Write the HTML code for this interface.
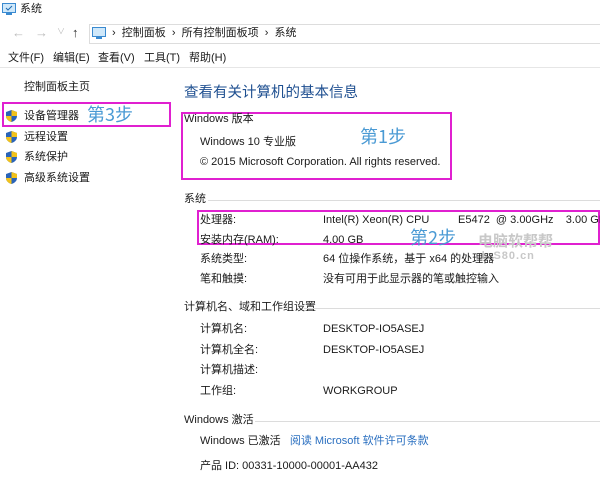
<!DOCTYPE html>
<html><head><meta charset="utf-8"><style>
body{margin:0;width:600px;height:479px;background:#fff;position:relative;overflow:hidden;font-family:"Liberation Sans","Noto Sans CJK SC",sans-serif;font-size:11px;color:#1a1a1a}
.a{position:absolute;white-space:nowrap;line-height:1}
.box{position:absolute;border:2px solid #e020d0;box-sizing:border-box}
.step{position:absolute;color:#4a9ad4;font-size:18px;line-height:1;font-family:"Noto Sans CJK SC",sans-serif}
.hl{position:absolute;height:1px;background:#dcdcdc}
.sh{position:absolute;width:11px;height:12px}
</style></head><body>
<svg class="a" style="left:2px;top:3px" width="14" height="12"><rect x="0.5" y="0.5" width="13" height="9" fill="#cfe8fa" stroke="#3a8ad0"/><path d="M4 5l2 2 4-4" stroke="#1e6ab0" fill="none"/><rect x="4" y="10" width="6" height="2" fill="#3a8ad0"/></svg>
<div class="a" style="left:20px;top:4px">系统</div>
<div class="a" style="left:12px;top:26px;color:#bbb;font-size:13px">←</div>
<div class="a" style="left:35px;top:26px;color:#bbb;font-size:13px">→</div>
<div class="a" style="left:57px;top:28px;color:#bbb;font-size:8px">∨</div>
<div class="a" style="left:72px;top:26px;color:#333;font-size:13px">↑</div>
<div class="a" style="left:89px;top:24px;width:520px;height:18px;border-top:1px solid #ddd;border-bottom:1px solid #ddd;border-left:1px solid #ddd"></div>
<svg class="a" style="left:92px;top:27px" width="14" height="12"><rect x="0.5" y="0.5" width="13" height="9" fill="#cfe8fa" stroke="#3a8ad0"/><rect x="4" y="10" width="6" height="2" fill="#3a8ad0"/></svg>
<div class="a" style="left:112px;top:28px">›&nbsp;&nbsp;控制面板&nbsp;&nbsp;›&nbsp;&nbsp;所有控制面板项&nbsp;&nbsp;›&nbsp;&nbsp;系统</div>
<div class="a" style="left:8px;top:53px">文件(F)</div>
<div class="a" style="left:53px;top:53px">编辑(E)</div>
<div class="a" style="left:98px;top:53px">查看(V)</div>
<div class="a" style="left:144px;top:53px">工具(T)</div>
<div class="a" style="left:189px;top:53px">帮助(H)</div>
<div class="hl" style="left:0;top:67px;width:600px;background:#e6e6e6"></div>
<div class="a" style="left:24px;top:82px">控制面板主页</div>
<div class="box" style="left:2px;top:102px;width:169px;height:25px"></div>
<div class="a" style="left:24px;top:111px">设备管理器</div>
<div class="step" style="left:87px;top:105px">第3步</div>
<div class="a" style="left:24px;top:132px">远程设置</div>
<div class="a" style="left:24px;top:152px">系统保护</div>
<div class="a" style="left:24px;top:173px">高级系统设置</div>
<svg class="sh" style="left:6px;top:110px" viewBox="0 0 11 12"><path d="M5.5 0L11 2v4c0 3-2.5 5-5.5 6C2.5 11 0 9 0 6V2z" fill="#2a64b8"/><path d="M5.5 0L11 2v4H5.5zM0 6h5.5v6C2.5 11 0 9 0 6z" fill="#f2c21a"/></svg>
<svg class="sh" style="left:6px;top:131px" viewBox="0 0 11 12"><path d="M5.5 0L11 2v4c0 3-2.5 5-5.5 6C2.5 11 0 9 0 6V2z" fill="#2a64b8"/><path d="M5.5 0L11 2v4H5.5zM0 6h5.5v6C2.5 11 0 9 0 6z" fill="#f2c21a"/></svg>
<svg class="sh" style="left:6px;top:151px" viewBox="0 0 11 12"><path d="M5.5 0L11 2v4c0 3-2.5 5-5.5 6C2.5 11 0 9 0 6V2z" fill="#2a64b8"/><path d="M5.5 0L11 2v4H5.5zM0 6h5.5v6C2.5 11 0 9 0 6z" fill="#f2c21a"/></svg>
<svg class="sh" style="left:6px;top:172px" viewBox="0 0 11 12"><path d="M5.5 0L11 2v4c0 3-2.5 5-5.5 6C2.5 11 0 9 0 6V2z" fill="#2a64b8"/><path d="M5.5 0L11 2v4H5.5zM0 6h5.5v6C2.5 11 0 9 0 6z" fill="#f2c21a"/></svg>
<div class="a" style="left:184px;top:86px;font-size:14.5px;color:#1e4f90">查看有关计算机的基本信息</div>
<div class="box" style="left:181px;top:112px;width:271px;height:68px"></div>
<div class="a" style="left:184px;top:114px">Windows 版本</div>
<div class="a" style="left:200px;top:137px">Windows 10 专业版</div>
<div class="a" style="left:200px;top:157px">© 2015 Microsoft Corporation. All rights reserved.</div>
<div class="step" style="left:360px;top:127px">第1步</div>
<div class="a" style="left:184px;top:194px">系统</div>
<div class="hl" style="left:208px;top:200px;width:392px"></div>
<div class="box" style="left:197px;top:210px;width:403px;height:35px"></div>
<div class="a" style="left:200px;top:215px">处理器:</div>
<div class="a" style="left:323px;top:215px">Intel(R) Xeon(R) CPU</div>
<div class="a" style="left:458px;top:215px">E5472&nbsp;&nbsp;@ 3.00GHz&nbsp;&nbsp;&nbsp;&nbsp;3.00 GHz</div>
<div class="a" style="left:200px;top:235px">安装内存(RAM):</div>
<div class="a" style="left:323px;top:235px">4.00 GB</div>
<div class="step" style="left:410px;top:228px">第2步</div>
<div class="a" style="left:478px;top:234px;color:#c8c8c8;font-size:15px;font-weight:bold">电脑软帮帮</div>
<div class="a" style="left:478px;top:251px;color:#c8c8c8;font-size:11px;font-weight:bold;letter-spacing:1px">dnS80.cn</div>
<div class="a" style="left:200px;top:254px">系统类型:</div>
<div class="a" style="left:323px;top:254px">64 位操作系统，基于 x64 的处理器</div>
<div class="a" style="left:200px;top:274px">笔和触摸:</div>
<div class="a" style="left:323px;top:274px">没有可用于此显示器的笔或触控输入</div>
<div class="a" style="left:184px;top:302px">计算机名、域和工作组设置</div>
<div class="hl" style="left:304px;top:308px;width:296px"></div>
<div class="a" style="left:200px;top:324px">计算机名:</div>
<div class="a" style="left:323px;top:324px">DESKTOP-IO5ASEJ</div>
<div class="a" style="left:200px;top:345px">计算机全名:</div>
<div class="a" style="left:323px;top:345px">DESKTOP-IO5ASEJ</div>
<div class="a" style="left:200px;top:365px">计算机描述:</div>
<div class="a" style="left:200px;top:386px">工作组:</div>
<div class="a" style="left:323px;top:386px">WORKGROUP</div>
<div class="a" style="left:184px;top:415px">Windows 激活</div>
<div class="hl" style="left:255px;top:421px;width:345px"></div>
<div class="a" style="left:200px;top:436px">Windows 已激活&nbsp;&nbsp;&nbsp;<span style="color:#2a6fc0">阅读 Microsoft 软件许可条款</span></div>
<div class="a" style="left:200px;top:461px">产品 ID: 00331-10000-00001-AA432</div>
</body></html>
